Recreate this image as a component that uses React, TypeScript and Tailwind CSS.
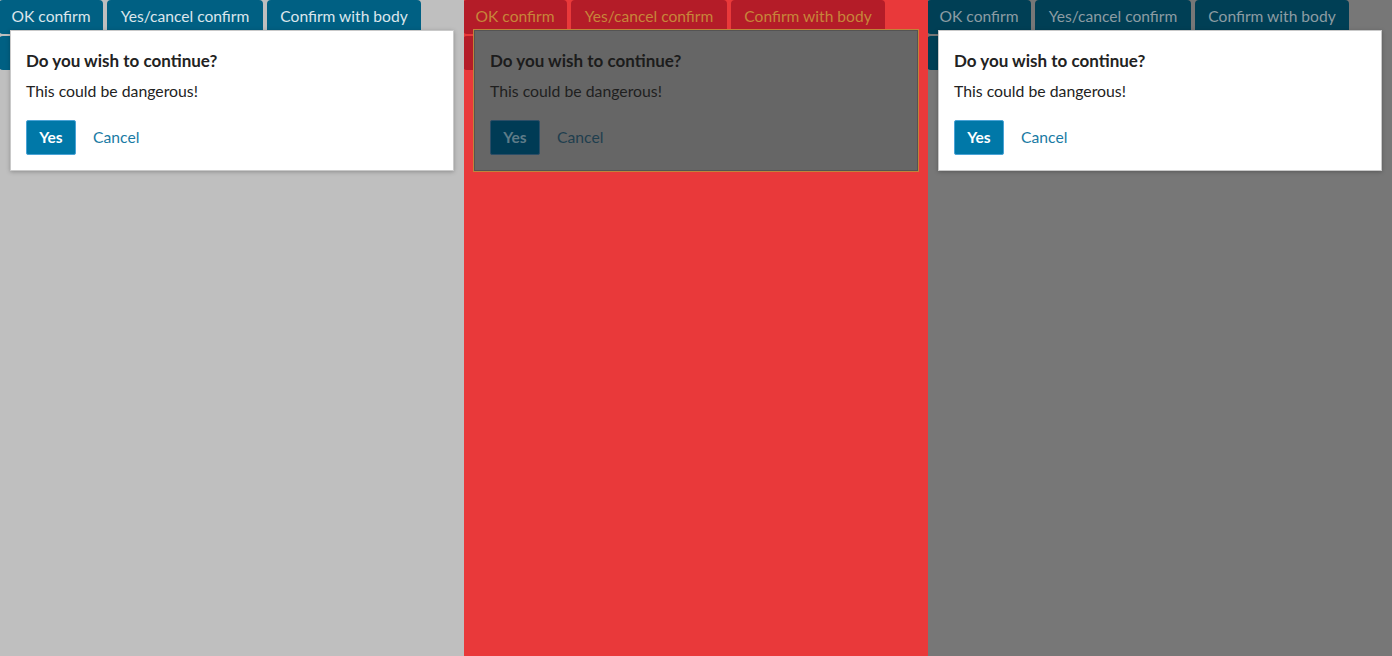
import React from "react";

type Theme = {
  bg: string;
  btn: string;
  btnText: string;
  dialog: string;
  title: string;
  body: string;
  yesBg: string;
  yesBorder: string;
  yesText: string;
  cancel: string;
};

const themes: Theme[] = [
  {
    bg: "bg-[#bfbfbf]",
    btn: "bg-[#006083]",
    btnText: "text-[#dbe6ec]",
    dialog: "bg-white border border-[#c9c9c9] shadow-[0_1px_4px_rgba(0,0,0,0.25)]",
    title: "text-[#222222]",
    body: "text-[#222222]",
    yesBg: "bg-[#0078a8]",
    yesBorder: "border-[#4aa3d6]",
    yesText: "text-white",
    cancel: "text-[#1a7aa4]",
  },
  {
    bg: "bg-[#e9393a]",
    btn: "bg-[#b41c28]",
    btnText: "text-[#c7853a]",
    dialog: "bg-[#666666] border border-[#545454] outline outline-1 outline-[#c0843a]",
    title: "text-[#1c1c1c]",
    body: "text-[#1f1f1f]",
    yesBg: "bg-[#003b55]",
    yesBorder: "border-[#2c4d66]",
    yesText: "text-[#5e7b88]",
    cancel: "text-[#1f3e4e]",
  },
  {
    bg: "bg-[#777777]",
    btn: "bg-[#003f55]",
    btnText: "text-[#8c9ca3]",
    dialog: "bg-white border border-[#c9c9c9] shadow-[0_1px_4px_rgba(0,0,0,0.25)]",
    title: "text-[#222222]",
    body: "text-[#222222]",
    yesBg: "bg-[#0078a8]",
    yesBorder: "border-[#4aa3d6]",
    yesText: "text-white",
    cancel: "text-[#1a7aa4]",
  },
];

function Panel({ t }: { t: Theme }) {
  const btn = `h-[34px] rounded-[4px] ${t.btn} ${t.btnText} text-[15.6px] flex items-center justify-center`;
  return (
    <div className={`relative w-[464px] h-[656px] overflow-hidden ${t.bg}`}>
      <div className="flex flex-wrap gap-x-[4px] gap-y-[2px] -ml-[1px] w-[440px]">
        <div className={`${btn} w-[104px]`}>OK confirm</div>
        <div className={`${btn} w-[156px]`}>Yes/cancel confirm</div>
        <div className={`${btn} w-[154px]`}>Confirm with body</div>
        <div className={`${btn} w-[220px]`} aria-hidden="true"></div>
      </div>
      <div
        className={`absolute left-[10px] top-[30px] w-[444px] h-[141px] px-[15px] pt-[16px] pb-[15px] ${t.dialog}`}
      >
        <div className={`text-[17px] font-bold leading-[28px] ${t.title}`}>
          Do you wish to continue?
        </div>
        <div className={`mt-[4px] text-[15.8px] leading-[24px] ${t.body}`}>
          This could be dangerous!
        </div>
        <div className="mt-[17px] flex items-center">
          <div
            className={`w-[50px] h-[35px] rounded-[2px] border ${t.yesBg} ${t.yesBorder} ${t.yesText} text-[15.5px] font-bold flex items-center justify-center`}
          >
            Yes
          </div>
          <div className={`ml-[17px] text-[15.7px] ${t.cancel}`}>Cancel</div>
        </div>
      </div>
    </div>
  );
}

export default function App() {
  return (
    <div
      className="flex w-[1392px] h-[656px] overflow-hidden"
      style={{ fontFamily: "Lato, 'Noto Sans', sans-serif" }}
    >
      {themes.map((t, i) => (
        <Panel key={i} t={t} />
      ))}
    </div>
  );
}
